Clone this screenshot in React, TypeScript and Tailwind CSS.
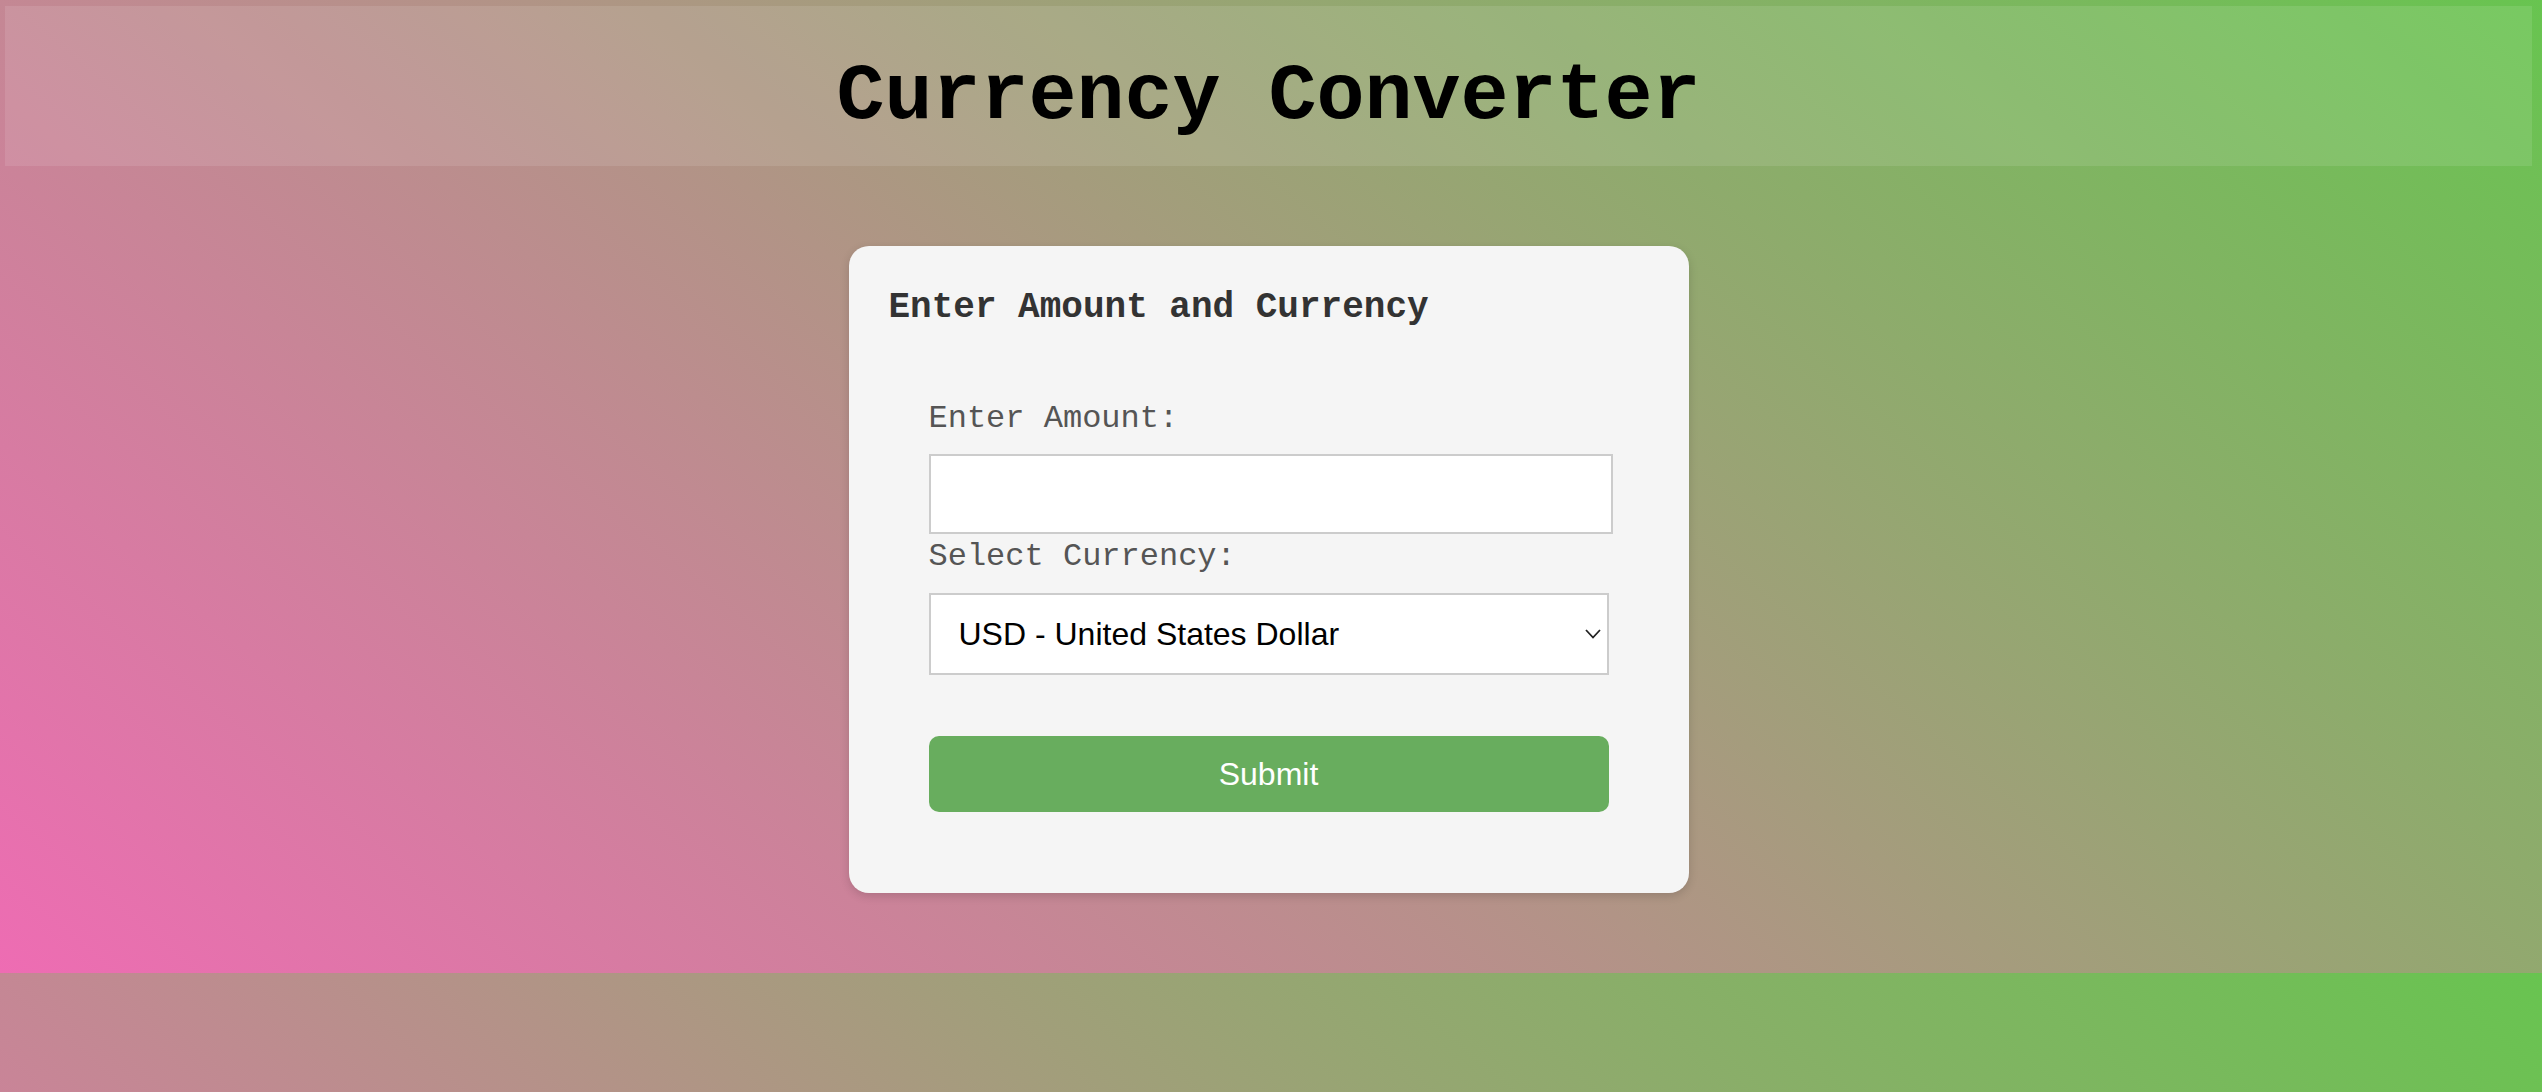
import React from 'react';

const currencies = [
  'USD - United States Dollar',
  'EUR - Euro',
  'GBP - British Pound',
  'JPY - Japanese Yen',
  'INR - Indian Rupee',
];

export default function App() {
  return (
    <div className="w-full h-[1092px] overflow-hidden bg-[linear-gradient(40deg,#ee6cb3,#68c450)] bg-[length:100%_973px] bg-repeat font-['Liberation_Mono',monospace]">
      {/* Title bar */}
      <header className="ml-[5px] mr-[10px] pt-[6px]">
        <div className="h-[160px] pt-[51px] bg-white/10 text-center">
          <h1 className="text-[80px] leading-[80px] font-bold text-black">Currency Converter</h1>
        </div>
      </header>

      <main className="ml-[5px] mr-[10px] pt-[80px]">
        <div className="mx-auto w-[840px] rounded-[20px] bg-[#f5f5f5] p-[40px] pb-[41px] shadow-[0_3px_10px_rgba(0,0,0,0.15)]">
          <h2 className="mt-[2px] mb-[31px] text-[36px] leading-[40px] font-bold text-[#333]">
            Enter Amount and Currency
          </h2>

          <form className="p-[40px]" onSubmit={(e) => e.preventDefault()}>
            <label className="block mt-[2px] mb-[17px] text-[32px] leading-[36px] text-[#555]">Enter Amount:</label>
            <input
              type="number"
              className="block w-[684px] h-[80px] border-2 border-[#ccc] bg-white outline-none px-[10px] text-[32px] font-['Liberation_Sans',sans-serif]"
            />

            <label className="block mt-[5px] mb-[18px] text-[32px] leading-[36px] text-[#555]">Select Currency:</label>
            <div className="relative w-[680px]">
              <select className="block w-[680px] h-[82px] appearance-none border-2 border-[#ccc] bg-white pl-[28px] text-[32px] text-black font-['Liberation_Sans',sans-serif] outline-none">
                {currencies.map((c) => (
                  <option key={c}>{c}</option>
                ))}
              </select>
              <svg
                className="absolute right-[8px] top-[36px] pointer-events-none"
                width="16"
                height="10"
                viewBox="0 0 16 10"
                fill="none"
              >
                <polyline points="1,1 8,8.5 15,1" stroke="#222" strokeWidth="1.8" />
              </svg>
            </div>

            <button
              type="submit"
              className="block mt-[61px] w-[680px] h-[76px] rounded-[10px] bg-[#68ad5e] text-white text-[32px] font-['Liberation_Sans',sans-serif]"
            >
              Submit
            </button>
          </form>
        </div>
      </main>
    </div>
  );
}
